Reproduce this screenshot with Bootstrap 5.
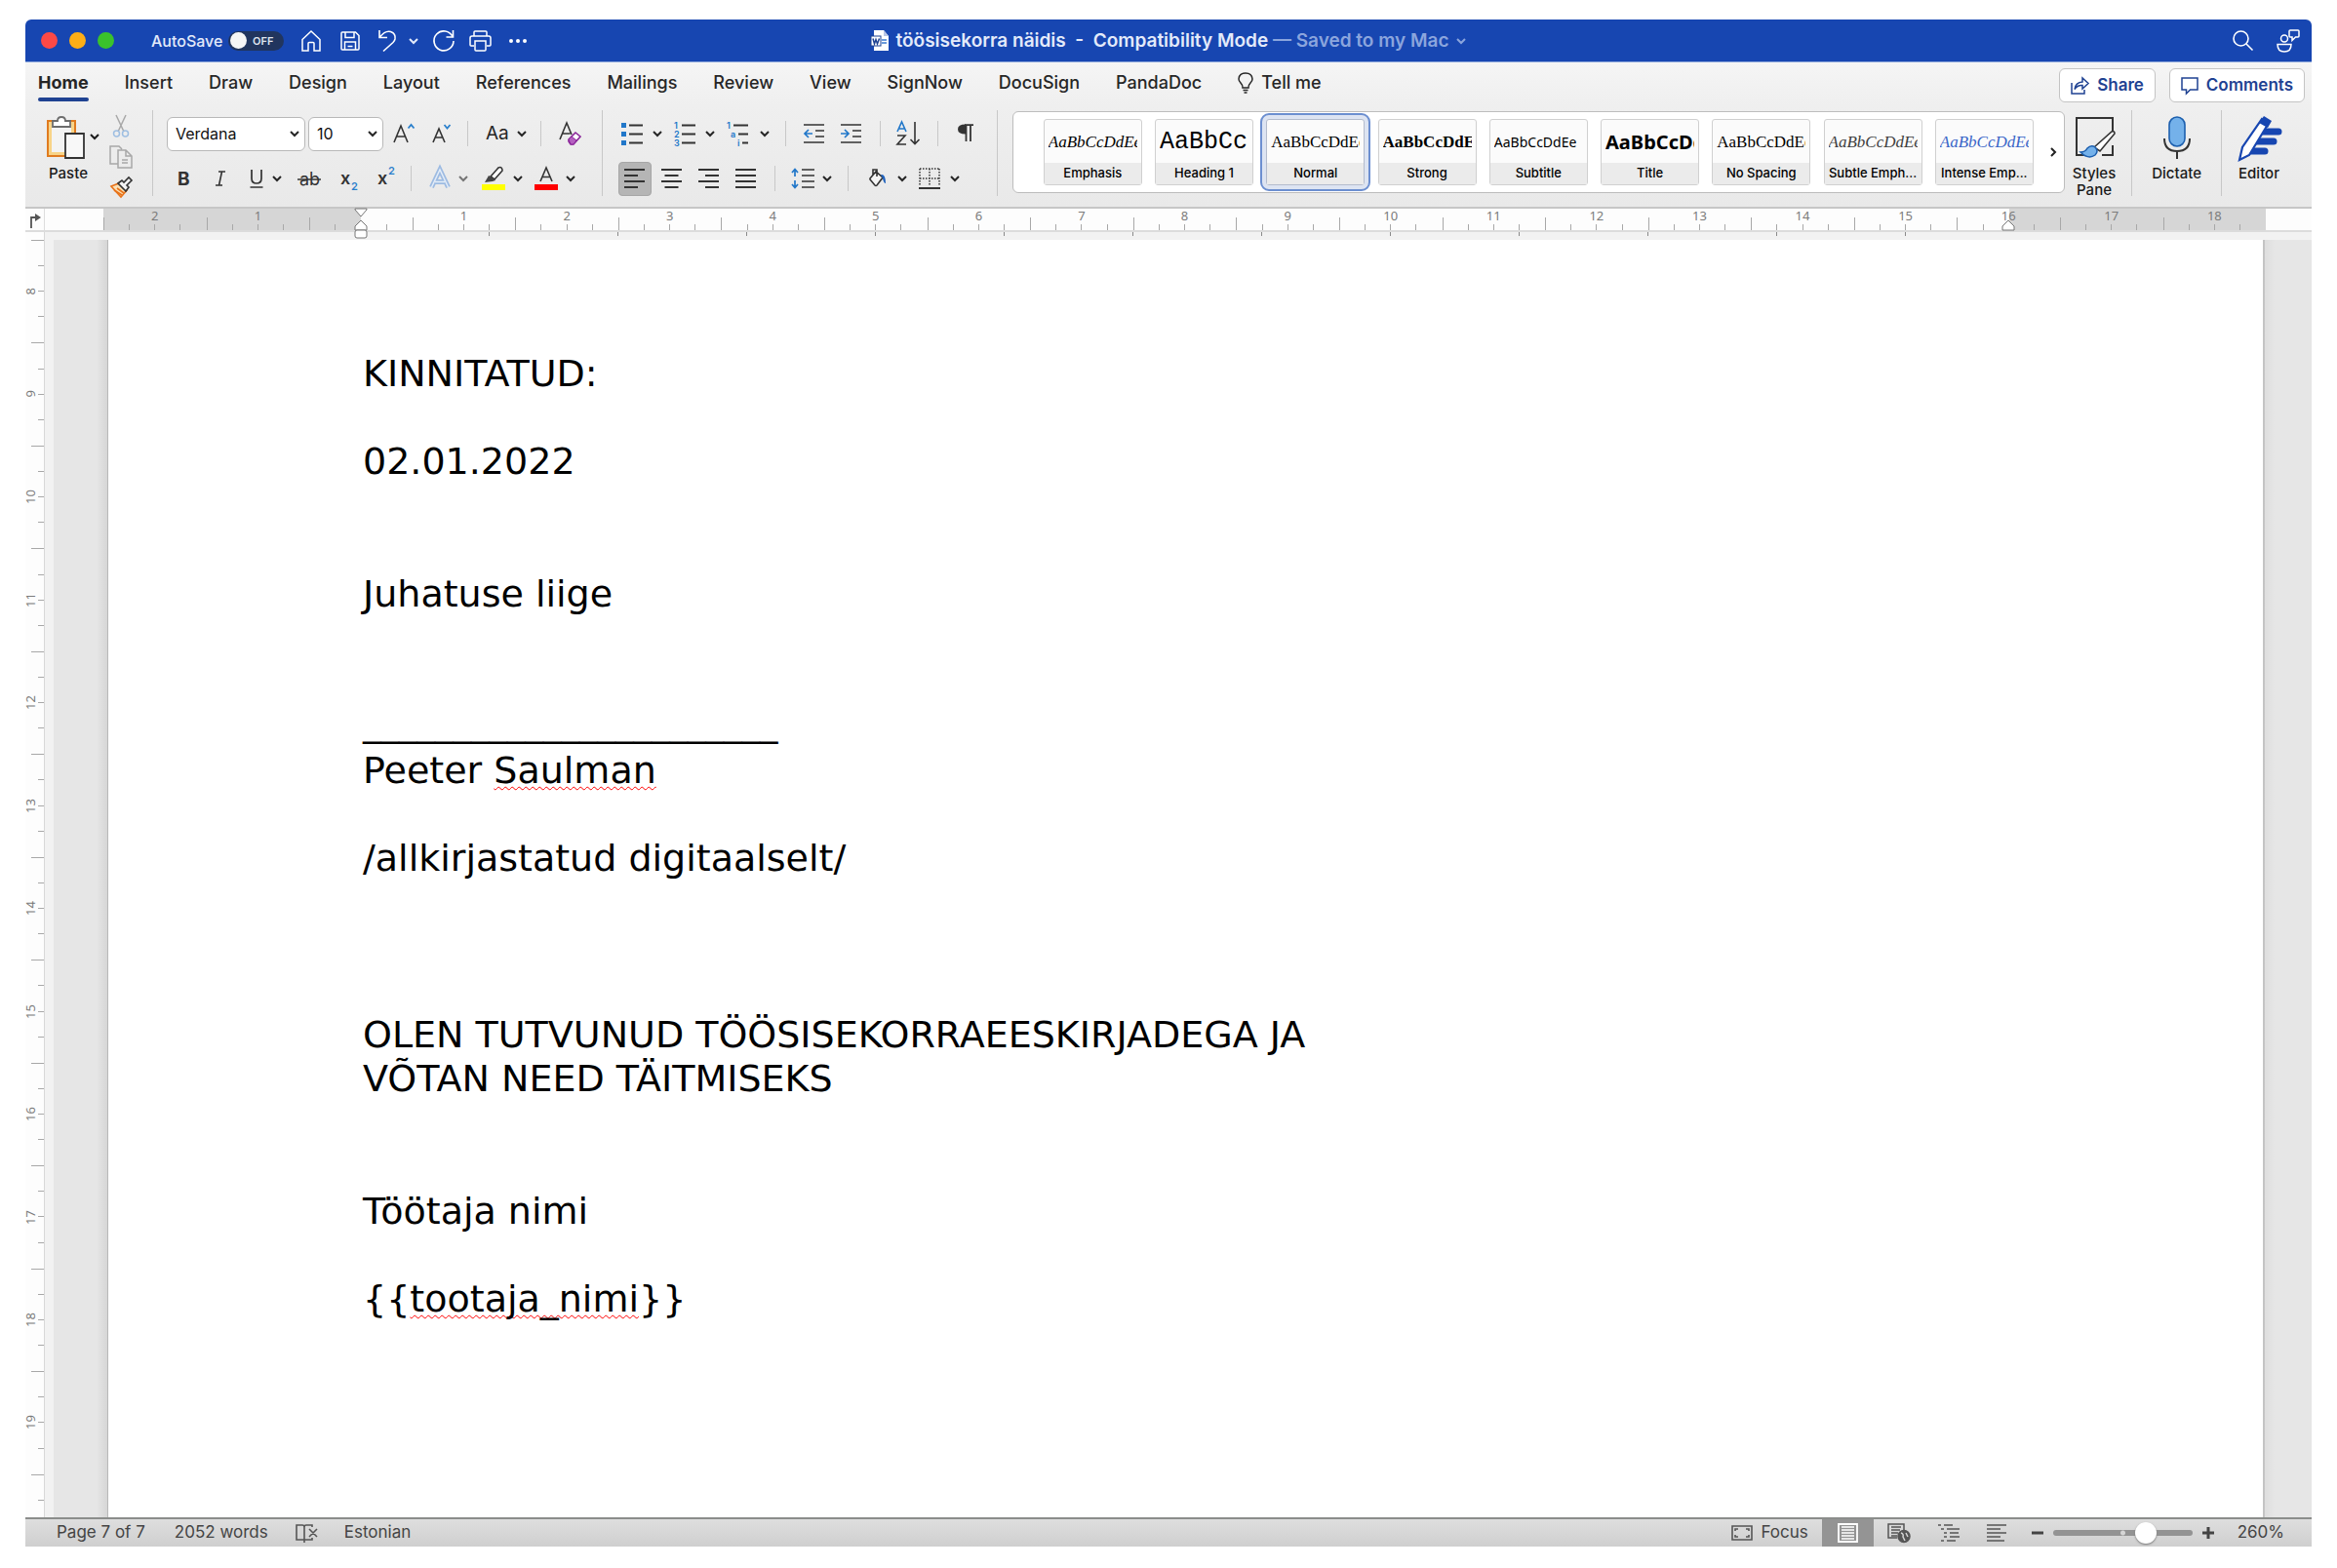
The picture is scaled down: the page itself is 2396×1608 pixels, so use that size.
<!DOCTYPE html>
<html lang="en">
<head>
<meta charset="utf-8">
<meta name="viewport" content="width=device-width, initial-scale=1">
<title>töösisekorra näidis</title>
<link href="https://cdn.jsdelivr.net/npm/bootstrap@5.3.0/dist/css/bootstrap.min.css" rel="stylesheet">
<style>
body{background:#fff;font-family:Inter,"Liberation Sans",sans-serif;color:#262626;padding:20px 26px 22px;min-height:100vh;display:flex;flex-direction:column}
svg{display:block;flex:none;overflow:visible}
button,a{color:inherit}
.app-win{flex:1;display:flex;flex-direction:column;min-height:0;overflow:hidden}
.plain-btn{border:0;background:none;padding:0;display:flex;align-items:center;justify-content:center;flex:none}
.s3{margin-left:3px}.s8{margin-left:8px}.s10{margin-left:10px}.s12{margin-left:12px}.s14{margin-left:14px}.s16{margin-left:16px}.s18{margin-left:18px}.s20{margin-left:20px}.s24{margin-left:24px}.s38{margin-left:38px}
.title-bar{height:44px;background:#1746b1;color:#e3eafa;border-bottom:1px solid #8ea8dc;border-radius:6px 6px 0 0}
.side{flex:1 1 0}
.dot{width:17px;height:17px;border-radius:50%}
.dot-r{background:#fc4946}.dot-y{background:#fdae17}.dot-g{background:#3ac22c}
.autosave{font-size:16px;font-weight:500;line-height:20px;margin-right:6px}
.toggle{width:57px;height:20px;border-radius:10px;background:#21355e;font-size:11px;font-weight:600;color:#dfe4ee;padding:0 11px 0 2px;justify-content:space-between;line-height:20px}
.knob{width:17px;height:17px;border-radius:50%;background:#f6f6f6}
.doc-title{font-size:19px;font-weight:600;line-height:24px;white-space:pre}
.dim{color:#8ba5dd}
.ribbon-all{background:linear-gradient(#f5f5f5,#efefef 30%,#e9e9e9);border-bottom:2px solid #c6c6c6;height:150px}
.tabs-row{height:49px;padding-left:13px;padding-right:7px}
.tab-link{font-size:18px;font-weight:500;line-height:24px;color:#262626;text-decoration:none;border-bottom:4px solid transparent;padding:9px 0 3px}
.tab-link.on{font-weight:700}
.tab-link.on span{display:block;position:relative}
.tab-link.on span::after{content:"";position:absolute;left:0;right:0;bottom:-7px;height:4px;border-radius:2px;background:#1f4292}
.tabs-gap{gap:37px}
.pill{height:35px;background:#fff;border:1px solid #c4c4c4;border-radius:6px;color:#1f4292;font-size:17px;font-weight:600;padding:0 11px;gap:8px;margin-top:6px;display:flex;align-items:center}
.tools{height:88px}
.vsep{width:1px;background:#c8c8c8;align-self:stretch;flex:none}
.vsep-s{width:1px;height:26px;background:#c8c8c8;flex:none}
.tool-rows{display:flex;flex-direction:column;justify-content:flex-end;gap:10px}
.tool-row{display:flex;align-items:center;height:36px}
.big-btn{border:0;background:none;padding:0;font-size:15px;line-height:17px;font-weight:500;color:#1a1a1a;display:flex;flex-direction:column;align-items:center;gap:6px}
.combo{height:35px;border:1px solid #b9b9b9;border-radius:6px;font-size:16px;padding:0 8px;color:#111;background-color:#fff;background-position:right 5px center;background-size:10px 8px;background-image:url("data:image/svg+xml,%3Csvg xmlns='http://www.w3.org/2000/svg' viewBox='0 0 10 8'%3E%3Cpath d='M1 2l4 4 4-4' fill='none' stroke='%23262626' stroke-width='2'/%3E%3C/svg%3E")}
.combo-f{width:142px}.combo-n{width:77px}
.pressed{width:34px;height:35px;border-radius:4px;background:#b5b5b5;border:1px solid #a6a6a6}
.glyph{font-size:19px;line-height:24px}
.gallery{flex:1;height:84px;background:#fff;border:1px solid #bdbdbd;border-radius:6px;padding:0 7px 0 31px;margin-left:15px;align-self:flex-start;margin-top:1px}
.style-item{width:101px;height:68px;border:1px solid #d0d0d0;border-radius:3px;background:#fbfbfb;padding:0;display:flex;flex-direction:column;color:#000}
.style-item.sel{outline:2px solid #6c8fd0;outline-offset:4px;box-shadow:0 0 0 5px #dde4f2;border-color:#b4bccd}
.sample{height:44px;line-height:46px;overflow:hidden;white-space:nowrap;margin:0 4px;text-align:left;align-self:stretch}
.sname{height:22px;line-height:21px;background:#ebebeb;font-size:13px;font-weight:500;align-self:stretch;text-align:center}
.tf{font-family:"Liberation Serif",serif;font-size:17px}
.mf{font-family:"Liberation Mono",monospace;font-size:25px}
.nf{font-family:"Noto Sans",sans-serif;font-size:14px}
.lf{font-family:"Noto Sans",sans-serif;font-size:20px;font-weight:700}
.tone-g{color:#404040}.tone-b{color:#3a66c8}
.h-ruler{height:24px;background:#fdfdfd;border-bottom:2px solid #dcdcdc;font-family:"Noto Sans",sans-serif;font-size:13px;color:#7b7b7b}
.corner{width:20px;border-right:1px solid #ddd;padding:5px 0 0 4px}
.r-lead{width:60px}.r-tail{width:47px}
.r-body{flex:1;display:flex;position:relative;background:linear-gradient(90deg,#d6d6d6 264px,#fdfdfd 264px calc(100% - 263px),#d6d6d6 calc(100% - 263px))}
.cm{flex:1 1 0;text-align:center;line-height:14px;background:linear-gradient(#a8a8a8,#a8a8a8) 0 100%/1px 13px,linear-gradient(#a8a8a8,#a8a8a8) 25% 100%/1px 6px,linear-gradient(#a8a8a8,#a8a8a8) 50% 100%/1px 6px,linear-gradient(#a8a8a8,#a8a8a8) 75% 100%/1px 6px;background-repeat:no-repeat}
.mk{position:absolute;top:0;z-index:2}
.mk-l{left:257px}.mk-r{right:257px}
.work{flex:1;min-height:0;background:#f2f2f2}
.v-ruler{width:20px;background:#fdfdfd;border-right:1px solid #d8d8d8;padding-top:8px;font-family:"Noto Sans",sans-serif;font-size:13px;color:#7b7b7b;overflow:hidden}
.vcm{flex:100 1 0;min-height:0;display:flex;align-items:center;background:linear-gradient(#a8a8a8,#a8a8a8) 100% 0/13px 1px,linear-gradient(#a8a8a8,#a8a8a8) 100% 25%/6px 1px,linear-gradient(#a8a8a8,#a8a8a8) 100% 50%/6px 1px,linear-gradient(#a8a8a8,#a8a8a8) 100% 75%/6px 1px;background-repeat:no-repeat}
.vcm span{writing-mode:vertical-rl;transform:rotate(180deg);line-height:10px;width:10px}
.vcm-last{flex:42 1 0;background:linear-gradient(#a8a8a8,#a8a8a8) 100% 0/13px 1px,linear-gradient(#a8a8a8,#a8a8a8) 100% 60%/6px 1px;background-repeat:no-repeat}
.canvas{flex:1;background:#e6e6e6;margin-left:9px}
.tab-stops{height:8px;background:#f2f2f2;padding:0 309px 0 315px}
.tab-stops div{height:4px;background:repeating-linear-gradient(90deg,transparent 0 131px,#8a8a8a 131px 132px)}
.gut-l{width:55px;background:linear-gradient(90deg,#e6e6e6 44px,#d6d6d6)}
.gut-r{width:48px;background:linear-gradient(90deg,#dedede,#e6e6e6 10px)}
.sheet{flex:1;background:#fff;border-left:1px solid #b8b8b8;border-right:2px solid #c4c4c4;padding:115px 259px 0 261px;font-family:"DejaVu Sans",sans-serif;font-size:38px;line-height:45px;color:#000}
.sheet p{margin:0}
.sheet .b1{margin-top:45px}.sheet .b2{margin-top:91px}.sheet .b3{margin-top:136px}
.sheet .sign-line{font-size:37px;line-height:37px;margin-bottom:8px}
.typo{text-decoration:underline wavy #f00 1px;text-decoration-skip-ink:none;text-underline-offset:3px}
.status{height:30px;border-top:2px solid #8b8d8b;background:linear-gradient(#dedede,#cfcfcf);font-size:17px;color:#444;padding:0 28px 0 32px}
.view-on{width:53px;background:#949494;align-self:stretch}
.zoomer{-webkit-appearance:none;appearance:none;width:143px;height:24px;background:none;margin:0 0 0 10px}
.zoomer::-webkit-slider-runnable-track{height:6px;border-radius:3px;background:radial-gradient(circle at 50% 50%,#d5d5d5 0 2px,#939393 3px)}
.zoomer::-webkit-slider-thumb{-webkit-appearance:none;width:22px;height:22px;border-radius:50%;background:#fff;margin-top:-8px;box-shadow:0 1px 2px #777}
</style>
<script src="https://cdn.jsdelivr.net/npm/bootstrap@5.3.0/dist/js/bootstrap.bundle.min.js"></script>
</head>
<body>
<svg width="0" height="0" class="position-absolute" aria-hidden="true">
<symbol id="chev" viewBox="0 0 10 8"><path d="M1 2l4 4 4-4" fill="none" stroke="currentColor" stroke-width="2"/></symbol>
</svg>
<div class="app-win">

<header class="title-bar d-flex align-items-center">
  <div class="side d-flex align-items-center">
    <span class="dot dot-r s16"></span><span class="dot dot-y s12"></span><span class="dot dot-g s12"></span>
    <span class="autosave s38">AutoSave</span>
    <button class="plain-btn toggle d-flex" aria-label="AutoSave off"><span class="knob"></span>OFF</button>
    <button class="plain-btn s18" aria-label="Home"><svg width="20" height="22" fill="none" stroke="#fff" stroke-width="1.5"><path d="M1 9.5L10 1l9 8.500V21h-6v-7.500q0-1-1-1H8q-1 0-1 1V21H1z"/></svg></button>
    <button class="plain-btn s20" aria-label="Save"><svg width="20" height="20" fill="none" stroke="#fff" stroke-width="1.5"><path d="M2 1h13.500L19 4.500V18q0 1-1 1H2q-1 0-1-1V2q0-1 1-1zM5 1v5.500h9V1M4.500 19v-8h11v8M7.500 15.500h5"/></svg></button>
    <button class="plain-btn s18" aria-label="Undo"><svg width="20" height="23" fill="none" stroke="#fff" stroke-width="1.600"><path d="M2 1v7.500h8M2.500 8Q8 1 13.500 2.500 19 4.500 18 10q-.5 2-2 3.500L6 22.500"/></svg></button>
    <button class="plain-btn s12" aria-label="Undo list"><svg width="10" height="8"><use href="#chev"/></svg></button>
    <button class="plain-btn s14" aria-label="Redo"><svg width="24" height="24" fill="none" stroke="#fff" stroke-width="1.600"><path d="M21.500 1v7h-7M21 7.500A10 10 0 1 0 22 12"/></svg></button>
    <button class="plain-btn s14" aria-label="Print"><svg width="23" height="22" fill="none" stroke="#fff" stroke-width="1.500"><path d="M5 6V2q0-1 1-1h11q1 0 1 1v4M5 16H2q-1 0-1-1V8q0-2 2-2h17q2 0 2 2v7q0 1-1 1h-3M6 11h11v9q0 1-1 1H7q-1 0-1-1z"/></svg></button>
    <button class="plain-btn s18" aria-label="More"><svg width="18" height="4" fill="#fff"><circle cx="2" cy="2" r="2"/><circle cx="9" cy="2" r="2"/><circle cx="16" cy="2" r="2"/></svg></button>
  </div>
  <div class="d-flex align-items-center gap-2">
    <svg width="18" height="21"><path d="M3 0h10l5 6v15H3z" fill="#fff"/><path d="M13 0v6h5z" fill="#b9c6e6"/><path d="M11 10h5M11 13h5" stroke="#3c7bd0" stroke-width="1.500"/><rect y="6" width="10" height="10" fill="#fff" stroke="#1f4292"/><path d="M2 8.500l1.500 5.500L5 9.500 6.500 14 8.500 8.500" fill="none" stroke="#1f4292" stroke-width="1.500"/></svg>
    <span class="doc-title">töösisekorra näidis  -  Compatibility Mode <span class="dim">— Saved to my Mac</span></span>
    <svg class="dim" width="10" height="8"><use href="#chev"/></svg>
  </div>
  <div class="side d-flex align-items-center justify-content-end">
    <button class="plain-btn" aria-label="Search"><svg width="21" height="21" fill="none" stroke="#fff" stroke-width="1.600"><circle cx="8.500" cy="8.500" r="7.500"/><path d="M14 14l6.500 6.500"/></svg></button>
    <button class="plain-btn s24 me-2 pe-1" aria-label="Account"><svg width="24" height="24" fill="none" stroke="#fff" stroke-width="1.500"><circle cx="8" cy="9.500" r="3.500"/><path d="M1 15.500h14q0 7.500-7 7.500t-7-7.500zM14 1h8q1 0 1 1v5q0 1-1 1h-2.500L16 11.500V8h-2q-1 0-1-1V2q0-1 1-1z"/></svg></button>
  </div>
</header>

<div class="ribbon-all">
  <div class="tabs-row d-flex justify-content-between align-items-start">
    <nav class="d-flex tabs-gap">
      <a href="#" class="tab-link on"><span>Home</span></a><a href="#" class="tab-link">Insert</a><a href="#" class="tab-link">Draw</a><a href="#" class="tab-link">Design</a><a href="#" class="tab-link">Layout</a><a href="#" class="tab-link">References</a><a href="#" class="tab-link">Mailings</a><a href="#" class="tab-link">Review</a><a href="#" class="tab-link">View</a><a href="#" class="tab-link">SignNow</a><a href="#" class="tab-link">DocuSign</a><a href="#" class="tab-link">PandaDoc</a>
      <a href="#" class="tab-link d-flex align-items-center"><svg class="me-2" width="16" height="22" fill="none" stroke="#262626" stroke-width="1.500"><path d="M5 16q0-3-2-5Q1 9 1 7q.5-6 7-6t7 6q0 2-2 4t-2 5zM5.500 18.500h5M6.500 21h3"/></svg>Tell me</a>
    </nav>
    <div class="d-flex">
      <button class="pill"><svg width="19" height="19" fill="none" stroke="#1f4292" stroke-width="1.500"><path d="M1 7v11h13v-4M4 13.500Q5 6.500 12 6V2l6 5.500-6 5.500V9.500Q7 9 4 13.500z"/></svg>Share</button>
      <button class="pill s14"><svg width="18" height="18" fill="none" stroke="#1f4292" stroke-width="1.500"><path d="M1 1h16v12H9.500L5.500 17v-4H1z"/></svg>Comments</button>
    </div>
  </div>

  <div class="tools d-flex">
    <button class="big-btn s20 pt-1"><span class="d-flex align-items-center gap-1"><svg width="42" height="46" fill="none"><path d="M3 7h28v36H3z" fill="#f8d488" stroke="#e07b1f" stroke-width="2"/><path d="M7 11h20v28H7z" fill="#f3f3f3"/><path d="M8 13V7h5q0-4 4-4t4 4h5v6z" fill="#fff" stroke="#6d6d6d" stroke-width="1.800"/><path d="M21 20h19v25H21z" fill="#f8f8f8" stroke="#333" stroke-width="1.800"/></svg><svg width="10" height="8"><use href="#chev"/></svg></span><span class="me-2">Paste</span></button>
    <div class="d-flex flex-column s10 gap-2 pt-1">
      <button class="plain-btn" aria-label="Cut"><svg width="22" height="24" fill="none"><path d="M6 1l8 17M16 1L8 18" stroke="#a8a8a8" stroke-width="1.500"/><circle cx="6.500" cy="20" r="3" stroke="#9fbfe2" stroke-width="1.500"/><circle cx="15.500" cy="20" r="3" stroke="#9fbfe2" stroke-width="1.500"/></svg></button>
      <button class="plain-btn" aria-label="Copy"><svg width="24" height="24" fill="none" stroke="#a8a8a8" stroke-width="1.500"><path d="M9 19H1V1h9l3 3M9 5h8l6 6v12H9zM17 5v6h6M13 15h6M13 18h6"/></svg></button>
      <button class="plain-btn" aria-label="Format painter"><svg width="24" height="22" fill="none" stroke-width="1.600"><path d="M2 10l8-3 8 7-6 7z" fill="#fbe0b5" stroke="#e8731a"/><path d="M5 14l8 5M8 12l7 5" stroke="#e8731a"/><path d="M9 7l4-3 2 2 5-5 3 3-5 5 2 2-3 4z" fill="#f4f4f4" stroke="#333"/></svg></button>
    </div>
    <div class="vsep s20"></div>

    <div class="tool-rows s14">
      <div class="tool-row">
        <select class="form-select combo combo-f" aria-label="Font"><option>Verdana</option></select>
        <select class="form-select combo combo-n s3" aria-label="Font size"><option>10</option></select>
        <button class="plain-btn s10" aria-label="Grow font"><svg width="22" height="24" fill="none"><path d="M1 21L8 4l7 17M3.500 15h9" stroke="#333" stroke-width="1.600"/><path d="M15.500 6.500L18.500 3l3 3.500" stroke="#2b80cc" stroke-width="1.800"/></svg></button>
        <button class="plain-btn s18" aria-label="Shrink font"><svg width="22" height="24" fill="none"><path d="M1 21L7 7l6 14M3.500 16h7" stroke="#333" stroke-width="1.600"/><path d="M12.500 3l3 3.500 3-3.500" stroke="#2b80cc" stroke-width="1.800"/></svg></button>
        <span class="vsep-s s14"></span>
        <button class="plain-btn glyph s18">Aa</button>
        <button class="plain-btn s8" aria-label="Case list"><svg width="10" height="8"><use href="#chev"/></svg></button>
        <span class="vsep-s s14"></span>
        <button class="plain-btn s18" aria-label="Clear formatting"><svg width="24" height="24" fill="none"><path d="M1 18L8 1l5 12M3.500 12h8" stroke="#333" stroke-width="1.600"/><path d="M10 18l7-7 5 4-7 8h-3l-2-3z" fill="#fff" stroke="#8a2499" stroke-width="1.600"/><path d="M10 18l3-3 5 4-3 4h-3z" fill="#b45fc0" stroke="#8a2499"/></svg></button>
      </div>
      <div class="tool-row">
        <button class="plain-btn s10 glyph fw-bold" aria-label="Bold"><svg width="16" height="24" fill="#333"><text x="1" y="19">B</text></svg></button>
        <button class="plain-btn s20" aria-label="Italic"><svg width="18" height="24" stroke="#333" stroke-width="1.600" fill="none"><path d="M7 5h7M4 19h7M10.500 5l-3 14"/></svg></button>
        <button class="plain-btn s20" aria-label="Underline"><svg width="16" height="24" stroke="#333" stroke-width="1.700" fill="none"><path d="M3 3v9q0 5 5 5t5-5V3M1.500 21h13"/></svg></button>
        <button class="plain-btn s8" aria-label="Underline list"><svg width="10" height="8"><use href="#chev"/></svg></button>
        <button class="plain-btn s16" aria-label="Strikethrough"><svg width="24" height="24" fill="#333"><text x="2" y="19" font-size="18">ab</text><path d="M0 13h24" stroke="#333" stroke-width="1.500"/></svg></button>
        <button class="plain-btn s20" aria-label="Subscript"><svg width="18" height="24" fill="#333"><text x="0" y="18" font-size="18" font-weight="600">x</text><text x="11" y="24" font-size="11" font-weight="600" fill="#2b80cc">2</text></svg></button>
        <button class="plain-btn s20" aria-label="Superscript"><svg width="18" height="24" fill="#333"><text x="0" y="18" font-size="18" font-weight="600">x</text><text x="11" y="8" font-size="11" font-weight="600" fill="#2b80cc">2</text></svg></button>
        <span class="vsep-s s16"></span>
        <button class="plain-btn s18" aria-label="Text effects"><svg width="22" height="24" fill="none"><path d="M2.500 21L11 3l8.500 18M6 15.500h10" stroke="#9dbbe2" stroke-width="5"/><path d="M2.500 21L11 3l8.500 18M6 15.500h10" stroke="#e4edf8" stroke-width="1.500"/></svg></button>
        <button class="plain-btn s8 text-black-50" aria-label="Effects list"><svg width="10" height="8"><use href="#chev"/></svg></button>
        <button class="plain-btn s14" aria-label="Highlight"><svg width="24" height="24"><path d="M0 18h24v6H0z" fill="#ff0"/><path d="M9 10L17 1q2-1 3 0t1 3l-8 9z" fill="#fff" stroke="#333" stroke-width="1.600"/><path d="M7 9l7 5-3 1-8 1z" fill="#444"/></svg></button>
        <button class="plain-btn s8" aria-label="Highlight list"><svg width="10" height="8"><use href="#chev"/></svg></button>
        <button class="plain-btn s12" aria-label="Font colour"><svg width="24" height="24"><path d="M6 15L12 1l6 14M8 10.500h8" fill="none" stroke="#333" stroke-width="1.600"/><path d="M0 18h24v6H0z" fill="#f00"/></svg></button>
        <button class="plain-btn s8" aria-label="Colour list"><svg width="10" height="8"><use href="#chev"/></svg></button>
      </div>
    </div>
    <div class="vsep s20"></div>

    <div class="tool-rows s16">
      <div class="tool-row">
        <button class="plain-btn s3" aria-label="Bullets"><svg width="22" height="24"><path d="M0 1h5v5H0zM0 10h5v5H0zM0 19h5v5H0z" fill="#2177c9"/><path d="M8 3.500h14M8 12.500h14M8 21.500h14" stroke="#333" stroke-width="1.800"/></svg></button>
        <button class="plain-btn s10" aria-label="Bullets list"><svg width="10" height="8"><use href="#chev"/></svg></button>
        <button class="plain-btn s12" aria-label="Numbering"><svg width="22" height="24" font-size="9" font-weight="600" fill="#2177c9"><text x="0" y="7">1</text><text x="0" y="16">2</text><text x="0" y="25">3</text><path d="M8 3.500h14M8 12.500h14M8 21.500h14" stroke="#333" stroke-width="1.800"/></svg></button>
        <button class="plain-btn s10" aria-label="Numbering list"><svg width="10" height="8"><use href="#chev"/></svg></button>
        <button class="plain-btn s12" aria-label="Multilevel list"><svg width="22" height="24" font-size="9" font-weight="600" fill="#2177c9"><text x="0" y="7">1</text><text x="4" y="16">a</text><text x="11" y="25">i</text><path d="M7 3.500h15M12 12.500h10M16 21.500h6" stroke="#333" stroke-width="1.800"/></svg></button>
        <button class="plain-btn s12" aria-label="Multilevel choices"><svg width="10" height="8"><use href="#chev"/></svg></button>
        <span class="vsep-s s16"></span>
        <button class="plain-btn s18" aria-label="Decrease indent"><svg width="22" height="22" fill="none" stroke="#333" stroke-width="1.700"><path d="M0 2h21M12 8h9M12 14h9M0 20h21"/><path d="M9 11H1M5 7l-4 4 4 4" stroke="#2177c9"/></svg></button>
        <button class="plain-btn s16" aria-label="Increase indent"><svg width="22" height="22" fill="none" stroke="#333" stroke-width="1.700"><path d="M0 2h21M12 8h9M12 14h9M0 20h21"/><path d="M0 11h8M4 7l4 4-4 4" stroke="#2177c9"/></svg></button>
        <span class="vsep-s s18"></span>
        <button class="plain-btn s16" aria-label="Sort"><svg width="24" height="26" fill="none"><path d="M1 11L5.500 1 10 11M3 8h5" stroke="#2177c9" stroke-width="1.600"/><path d="M1 15h8L1 24h9M19 1v22M14.500 19l4.500 4.500 4.500-4.500" stroke="#333" stroke-width="1.600"/></svg></button>
        <span class="vsep-s s18"></span>
        <button class="plain-btn s20" aria-label="Show marks"><svg width="16" height="20"><path d="M7 1.200h9M8.500 1v17M13 1v17" stroke="#333" stroke-width="1.800"/><path d="M8 .5Q0 .5 0 5.500T8 10.500z" fill="#333"/></svg></button>
      </div>
      <div class="tool-row">
        <button class="plain-btn pressed" aria-label="Align left"><svg width="22" height="20" stroke="#333" stroke-width="1.800"><path d="M0 1h21M0 7h14M0 13h21M0 19h14"/></svg></button>
        <button class="plain-btn s10" aria-label="Centre"><svg width="22" height="20" stroke="#333" stroke-width="1.800"><path d="M0 1h21M3.500 7h14M0 13h21M3.500 19h14"/></svg></button>
        <button class="plain-btn s16" aria-label="Align right"><svg width="22" height="20" stroke="#333" stroke-width="1.800"><path d="M0 1h21M7 7h14M0 13h21M7 19h14"/></svg></button>
        <button class="plain-btn s16" aria-label="Justify"><svg width="22" height="20" stroke="#333" stroke-width="1.800"><path d="M0 1h21M0 7h21M0 13h21M0 19h21"/></svg></button>
        <span class="vsep-s s18"></span>
        <button class="plain-btn s16" aria-label="Line spacing"><svg width="24" height="20" fill="none" stroke="#333" stroke-width="1.700"><path d="M11 1h13M11 7h13M11 13h13M11 19h13"/><path d="M4 0v8M1 4l3-3.500L7 4M4 12v8M1 16l3 3.500L7 16" stroke="#2177c9"/></svg></button>
        <button class="plain-btn s8" aria-label="Spacing list"><svg width="10" height="8"><use href="#chev"/></svg></button>
        <span class="vsep-s s16"></span>
        <button class="plain-btn s20" aria-label="Shading"><svg width="22" height="20" fill="none"><path d="M2 10l6-7 7 6-6 8q-1 1-2 0l-5-6zM5 6V1h4v7" stroke="#333" stroke-width="1.600" fill="#f5f5f5"/><path d="M13 6q5-1 5 9-2 0-3-5z" fill="#1f62bd"/></svg></button>
        <button class="plain-btn s8" aria-label="Shading list"><svg width="10" height="8"><use href="#chev"/></svg></button>
        <button class="plain-btn s12" aria-label="Borders"><svg width="22" height="22" fill="none" stroke="#333"><path d="M1 1h20M1 11h20M1 1v18M11 1v18M21 1v18" stroke-width="1.500" stroke-dasharray="1.500 1.500"/><path d="M0 21h22" stroke-width="2"/></svg></button>
        <button class="plain-btn s10" aria-label="Borders list"><svg width="10" height="8"><use href="#chev"/></svg></button>
      </div>
    </div>
    <div class="vsep s24"></div>

    <div class="gallery d-flex align-items-center">
      <div class="flex-grow-1 d-flex justify-content-between">
        <button class="style-item"><span class="sample tf fst-italic">AaBbCcDdEe</span><span class="sname">Emphasis</span></button>
        <button class="style-item"><span class="sample mf">AaBbCc</span><span class="sname">Heading 1</span></button>
        <button class="style-item sel"><span class="sample tf">AaBbCcDdEe</span><span class="sname">Normal</span></button>
        <button class="style-item"><span class="sample tf fw-bold">AaBbCcDdEe</span><span class="sname">Strong</span></button>
        <button class="style-item"><span class="sample nf">AaBbCcDdEe</span><span class="sname">Subtitle</span></button>
        <button class="style-item"><span class="sample lf">AaBbCcDd</span><span class="sname">Title</span></button>
        <button class="style-item"><span class="sample tf">AaBbCcDdEe</span><span class="sname">No Spacing</span></button>
        <button class="style-item"><span class="sample tf fst-italic tone-g">AaBbCcDdEe</span><span class="sname">Subtle Emph...</span></button>
        <button class="style-item"><span class="sample tf fst-italic tone-b">AaBbCcDdEe</span><span class="sname">Intense Emp...</span></button>
      </div>
      <button class="plain-btn s16" aria-label="More styles"><svg width="8" height="10" fill="none" stroke="#222" stroke-width="2"><path d="M2 1l4 4-4 4"/></svg></button>
    </div>
    <button class="big-btn s8 pt-1"><svg width="44" height="46" fill="none"><path d="M14 42H4V4h37v16M41 32v10H30" stroke="#333" stroke-width="2"/><path d="M22 34L40 18q3-1 3 2L28 38z" fill="#fff" stroke="#333" stroke-width="1.600"/><path d="M8 39q5 0 7-4 4-4 8-1 4 4 0 8-7 5-15-3z" fill="#74b1ea" stroke="#1c5fae" stroke-width="1.500"/></svg><span>Styles<br>Pane</span></button>
    <div class="vsep s16"></div>
    <button class="big-btn s16 px-1 pt-1"><svg width="30" height="46" fill="none"><rect x="7" y="3" width="16" height="30" rx="8" fill="#74b1ea" stroke="#1c5fae" stroke-width="1.600"/><path d="M2 25q0 13 13 13t13-13M15 38v8" stroke="#333" stroke-width="2"/></svg>Dictate</button>
    <div class="vsep s16"></div>
    <button class="big-btn s16 me-4 pe-2 pt-1"><svg width="44" height="46"><path d="M22 18h20M17 28h20M12 38h16" stroke="#1746b1" stroke-width="7" stroke-linecap="round"/><path d="M25 5l7 4-20 33-10 5 3-13z" fill="#fff" stroke="#1746b1" stroke-width="2.200"/><path d="M22 9l5-7 8 5-4 7z" fill="#1746b1"/></svg>Editor</button>
  </div>
</div>

<div class="h-ruler d-flex">
  <div class="corner"><svg width="12" height="15"><path d="M2 15V4h5" fill="none" stroke="#555" stroke-width="1.800"/><path d="M6 0l6 4-6 4z" fill="#555"/></svg></div>
  <div class="r-lead"></div>
  <div class="r-body">
    <svg class="mk mk-l" width="14" height="31" fill="#fff" stroke="#777"><path d="M1 0h12v1L7 8 1 1z"/><path d="M7 12l6 6v4H1v-4z"/><rect x="1" y="22" width="12" height="8" rx="2"/></svg>
    <svg class="mk mk-r" width="14" height="31" fill="#fff" stroke="#777"><path d="M7 12l6 6v4H1v-4z"/></svg>
    <span class="cm">2</span><span class="cm">1</span><span class="cm"></span><span class="cm">1</span><span class="cm">2</span><span class="cm">3</span><span class="cm">4</span><span class="cm">5</span><span class="cm">6</span><span class="cm">7</span><span class="cm">8</span><span class="cm">9</span><span class="cm">10</span><span class="cm">11</span><span class="cm">12</span><span class="cm">13</span><span class="cm">14</span><span class="cm">15</span><span class="cm">16</span><span class="cm">17</span><span class="cm">18</span>
  </div>
  <div class="r-tail"></div>
</div>

<div class="work d-flex">
  <div class="v-ruler d-flex flex-column">
    <div class="vcm"><span>8</span></div><div class="vcm"><span>9</span></div><div class="vcm"><span>10</span></div><div class="vcm"><span>11</span></div><div class="vcm"><span>12</span></div><div class="vcm"><span>13</span></div><div class="vcm"><span>14</span></div><div class="vcm"><span>15</span></div><div class="vcm"><span>16</span></div><div class="vcm"><span>17</span></div><div class="vcm"><span>18</span></div><div class="vcm"><span>19</span></div><div class="vcm-last"></div>
  </div>
  <div class="canvas d-flex flex-column">
    <div class="tab-stops"><div></div></div>
    <div class="d-flex flex-grow-1">
      <div class="gut-l"></div>
      <main class="sheet">
        <p>KINNITATUD:</p>
        <p class="b1">02.01.2022</p>
        <p class="b2">Juhatuse liige</p>
        <p class="b2 sign-line">_______________________</p>
        <p>Peeter <span class="typo">Saulman</span></p>
        <p class="b1">/allkirjastatud digitaalselt/</p>
        <p class="b3">OLEN TUTVUNUD TÖÖSISEKORRAEESKIRJADEGA JA<br>VÕTAN NEED TÄITMISEKS</p>
        <p class="b2">Töötaja nimi</p>
        <p class="b1">{{<span class="typo">tootaja_nimi</span>}}</p>
      </main>
      <div class="gut-r"></div>
    </div>
  </div>
</div>

<footer class="status d-flex align-items-center">
  <span>Page 7 of 7</span><span class="s14 ps-3">2052 words</span>
  <button class="plain-btn s12 ps-3" aria-label="Proofing"><svg width="24" height="20" fill="none" stroke="#555" stroke-width="1.600"><path d="M9 17H1V2h6q2 0 2 2v13zM9 4q0-2 2-2h6v2M9 17h8v-2M9 17v3M14 6l8 8M22 6l-8 8"/></svg></button>
  <span class="s10 ps-3">Estonian</span>
  <button class="plain-btn ms-auto" aria-label="Focus"><svg class="me-2" width="22" height="16" fill="none" stroke="#555" stroke-width="1.600"><path d="M1 1h20v14H1zM4 6V4h3M15 4h3v2M18 10v2h-3M7 12H4v-2"/></svg>Focus</button>
  <button class="plain-btn view-on s14" aria-label="Print layout"><svg width="21" height="20" fill="none" stroke="#fff"><path d="M1 1h19v18H1z" stroke-width="1.800"/><path d="M4 4h13M4 7h13M4 10h13M4 13h13M4 16h13" stroke-width="1.300"/></svg></button>
  <button class="plain-btn s14" aria-label="Web layout"><svg width="24" height="20" fill="none" stroke="#555" stroke-width="1.500"><path d="M10 15H1V1h16v6M4 4h10M4 7h9M4 10h7M4 13h6"/><circle cx="17" cy="13.500" r="6" fill="#555"/><path d="M14 10q3 1 2 4l2 4M19 10l2 4" stroke="#d5d5d5"/></svg></button>
  <button class="plain-btn s24" aria-label="Outline"><svg class="ms-1" width="22" height="18" fill="none" stroke="#555" stroke-width="1.600"><path d="M0 1h3M6 1h9M3 5h3M9 5h13M6 9h3M12 9h9M6 13h3M12 13h10M3 17h3M9 17h9"/></svg></button>
  <button class="plain-btn s24" aria-label="Draft"><svg class="ms-1" width="22" height="18" fill="none" stroke="#555" stroke-width="1.600"><path d="M0 1h20M0 5h14M0 9h20M0 13h14M0 17h18"/></svg></button>
  <button class="plain-btn s24" aria-label="Zoom out"><svg width="12" height="4"><path d="M0 2h12" stroke="#444" stroke-width="3"/></svg></button>
  <input type="range" class="zoomer" min="0" max="100" value="70" aria-label="Zoom">
  <button class="plain-btn s10" aria-label="Zoom in"><svg width="12" height="12"><path d="M0 6h12M6 0v12" stroke="#444" stroke-width="3"/></svg></button>
  <span class="s24">260%</span>
</footer>
</div>
</body>
</html>
